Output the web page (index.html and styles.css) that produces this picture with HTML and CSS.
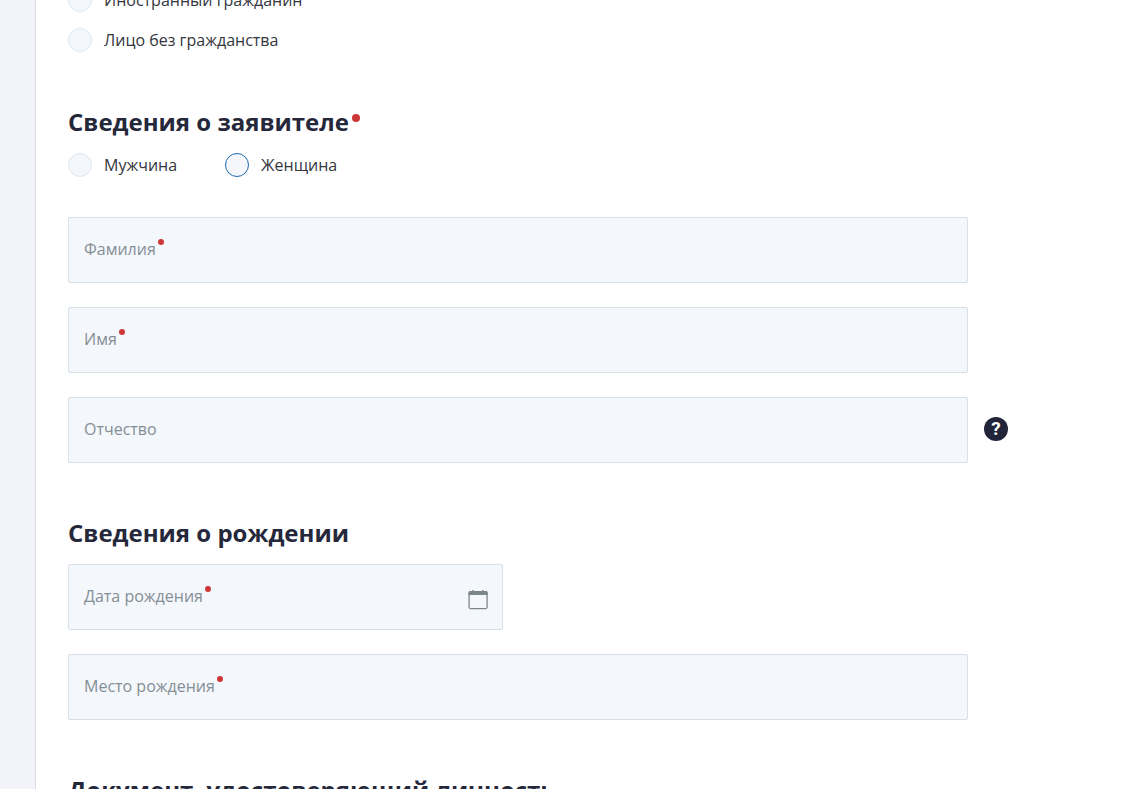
FILE: index.html
```
<!DOCTYPE html>
<html lang="ru">
<head>
  <meta charset="UTF-8">
  <meta name="viewport" content="width=device-width, initial-scale=1.0">
  <title>Заявление</title>
  <link rel="stylesheet" href="styles.css">
</head>
<body>

  <main class="page">
    <form class="form">

      <div class="radio-list">
        <label class="radio"><input type="radio" name="citizenship"> Иностранный гражданин</label>
        <label class="radio"><input type="radio" name="citizenship"> Лицо без гражданства</label>
      </div>

      <section class="section">
        <h2>Сведения о заявителе<span class="required"></span></h2>
        <div class="radio-row">
          <label class="radio"><input type="radio" name="gender"> Мужчина</label>
          <label class="radio"><input class="active" type="radio" name="gender"> Женщина</label>
        </div>
        <div class="fields">
          <div class="field">
            <input type="text" id="surname" placeholder=" " required>
            <label for="surname">Фамилия<span class="required"></span></label>
          </div>
          <div class="field">
            <input type="text" id="name" placeholder=" " required>
            <label for="name">Имя<span class="required"></span></label>
          </div>
          <div class="field">
            <input type="text" id="patronymic" placeholder=" ">
            <label for="patronymic">Отчество</label>
            <button type="button" class="help">?</button>
          </div>
        </div>
      </section>

      <section class="section">
        <h2>Сведения о рождении</h2>
        <div class="fields">
          <div class="field half">
            <input type="text" id="birthdate" placeholder=" " required>
            <label for="birthdate">Дата рождения<span class="required"></span></label>
            <svg class="calendar" width="20" height="20" viewBox="0 0 20 20">
              <rect x="1.1" y="1.6" width="18" height="17" rx="1.5" fill="none" stroke="#7d868c" stroke-width="1.3"/>
              <path d="M0.5 5V3Q0.5 1 2.5 1H4V0.2H6V1H14V0.2H16V1H17.7Q19.7 1 19.7 3V5Z" fill="#7d868c"/>
            </svg>
          </div>
          <div class="field">
            <input type="text" id="birthplace" placeholder=" " required>
            <label for="birthplace">Место рождения<span class="required"></span></label>
          </div>
        </div>
      </section>

      <section class="section">
        <h2>Документ, удостоверяющий личность</h2>
      </section>

    </form>
  </main>

</body>
</html>
```
FILE: styles.css
```
* { box-sizing: border-box; }
body {
  margin: 0;
  height: 100vh;
  overflow: hidden;
  background-color: #f2f3f8;
  color: #33363d;
  font: 16px/24px "Open Sans", "Noto Sans", sans-serif;
}
.page {
  height: 100%;
  margin-left: 35px;
  padding: 0 32px;
  overflow: hidden;
  background-color: #fff;
  border-left: 1px solid #d9dae2;
}
/* the form is scrolled to the middle of the first radio */
.form {
  max-width: 900px;
  margin-top: -12px;
}
.section { margin-top: 53px; }
h2 {
  margin: 0 0 14px;
  color: #25273a;
  font-size: 24px;
  font-weight: 700;
  line-height: 34px;
}

.required {
  display: inline-block;
  width: 6px;
  height: 6px;
  margin-left: 2px;
  border-radius: 50%;
  background-color: #cd3738;
  vertical-align: 10px;
}
h2 .required {
  width: 8px;
  height: 8px;
  margin-left: 3px;
  vertical-align: 9px;
}

.radio-list {
  display: flex;
  flex-direction: column;
  gap: 16px;
}
.radio-row {
  display: flex;
  gap: 48px;
  margin-bottom: 40px;
}
.radio {
  display: flex;
  align-items: center;
  gap: 12px;
}
.radio input {
  appearance: none;
  width: 24px;
  height: 24px;
  margin: 0;
  border: 1px solid #dfe4ee;
  border-radius: 50%;
  background-color: #f4f7fc;
}
.radio input.active,
.radio input:hover { border-color: #1f69a8; }
.radio input:checked {
  border: 7px solid #1f69a8;
}

.fields {
  display: grid;
  gap: 24px;
}
.field { position: relative; }
.field.half { width: calc(50% - 15px); }
.field input {
  display: block;
  width: 100%;
  height: 66px;
  padding: 0 15px;
  border: 1px solid #d8dfe8;
  border-radius: 2px;
  background-color: #f4f7fc;
  color: inherit;
  font: inherit;
}
.field label {
  position: absolute;
  top: 20px;
  left: 16px;
  color: #858e95;
  pointer-events: none;
}
.field input:not(:placeholder-shown) + label { display: none; }
.calendar {
  position: absolute;
  top: 26px;
  right: 15px;
}
.help {
  position: absolute;
  top: 20px;
  left: calc(100% + 16px);
  width: 24px;
  height: 24px;
  padding: 0;
  border: none;
  border-radius: 50%;
  background-color: #22243a;
  color: #fff;
  font: 700 19px/24px Roboto, sans-serif;
  cursor: pointer;
}
```
